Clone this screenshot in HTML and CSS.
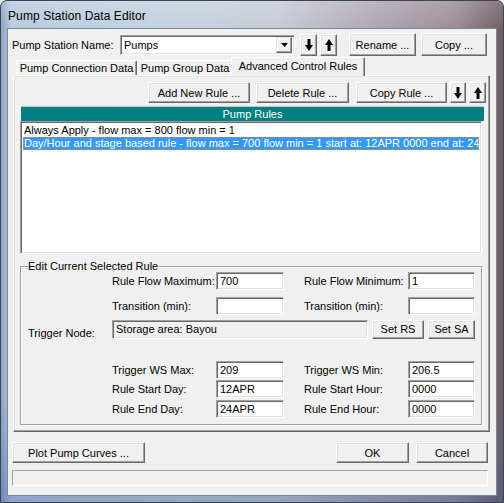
FILE: index.html
```html
<!DOCTYPE html>
<html>
<head>
<meta charset="utf-8">
<link rel="stylesheet" href="styles.css">
</head>
<body>
<div class="window">
  <div class="titlebar"><span class="title">Pump Station Data Editor</span></div>
  <div class="client">
    <div class="toprow">
      <span class="name-lbl">Pump Station Name:</span>
      <div class="combo">
        <span class="combo-text">Pumps</span>
        <span class="combo-btn"><svg width="7" height="4" viewBox="0 0 7 4"><path d="M0 0H7L3.5 4Z" fill="#000"/></svg></span>
      </div>
      <button class="btn arrow first"><svg width="8" height="12" viewBox="0 0 8 12"><path d="M2.5 0H5.5V6H8L4 12L0 6H2.5Z" fill="#000"/></svg></button>
      <button class="btn arrow"><svg width="8" height="12" viewBox="0 0 8 12"><path d="M2.5 12H5.5V6H8L4 0L0 6H2.5Z" fill="#000"/></svg></button>
      <button class="btn rename">Rename ...</button>
      <button class="btn copy">Copy ...</button>
    </div>
    <div class="tabs">
      <div class="tab t1">Pump Connection Data</div>
      <div class="tab t2">Pump Group Data</div>
      <div class="tab active">Advanced Control Rules</div>
    </div>
    <div class="panel">
      <div class="rulebtns">
        <button class="btn b-add">Add New Rule ...</button>
        <button class="btn b-del">Delete Rule ...</button>
        <button class="btn b-copy">Copy Rule ...</button>
        <button class="btn arrow b-down"><svg width="8" height="12" viewBox="0 0 8 12"><path d="M2.5 0H5.5V6H8L4 12L0 6H2.5Z" fill="#000"/></svg></button>
        <button class="btn arrow b-up"><svg width="8" height="12" viewBox="0 0 8 12"><path d="M2.5 12H5.5V6H8L4 0L0 6H2.5Z" fill="#000"/></svg></button>
      </div>
      <div class="rules-head">Pump Rules</div>
      <div class="list">
        <div class="item">Always Apply - flow max = 800 flow min = 1</div>
        <div class="item sel">Day/Hour and stage based rule - flow max = 700 flow min = 1 start at: 12APR 0000 end at: 24APR 0000</div>
      </div>
      <div class="group">
        <div class="legend">Edit Current Selected Rule</div>
        <div class="frow r1">
          <span class="c1"></span>
          <span class="lab">Rule Flow Maximum:</span>
          <span class="field f1">700</span>
          <span class="gap"></span>
          <span class="lab">Rule Flow Minimum:</span>
          <span class="field f2">1</span>
        </div>
        <div class="frow r2">
          <span class="c1"></span>
          <span class="lab">Transition (min):</span>
          <span class="field f1"></span>
          <span class="gap"></span>
          <span class="lab">Transition (min):</span>
          <span class="field f2"></span>
        </div>
        <div class="frow r3">
          <span class="c1 node-lbl">Trigger Node:</span>
          <span class="field disabled">Storage area: Bayou</span>
          <button class="btn b-rs">Set RS</button>
          <button class="btn b-sa">Set SA</button>
        </div>
        <div class="frow r4">
          <span class="c1"></span>
          <span class="lab">Trigger WS Max:</span>
          <span class="field f1">209</span>
          <span class="gap"></span>
          <span class="lab">Trigger WS Min:</span>
          <span class="field f2">206.5</span>
        </div>
        <div class="frow r5">
          <span class="c1"></span>
          <span class="lab">Rule Start Day:</span>
          <span class="field f1">12APR</span>
          <span class="gap"></span>
          <span class="lab">Rule Start Hour:</span>
          <span class="field f2">0000</span>
        </div>
        <div class="frow r6">
          <span class="c1"></span>
          <span class="lab">Rule End Day:</span>
          <span class="field f1">24APR</span>
          <span class="gap"></span>
          <span class="lab">Rule End Hour:</span>
          <span class="field f2">0000</span>
        </div>
      </div>
    </div>
    <div class="bottomrow">
      <button class="btn b-plot">Plot Pump Curves ...</button>
      <button class="btn b-ok">OK</button>
      <button class="btn b-cancel">Cancel</button>
    </div>
    <div class="status"></div>
  </div>
</div>
</body>
</html>
```
FILE: styles.css
```css
* { box-sizing: border-box; }
html, body { margin: 0; padding: 0; }
body {
  background: #eef0f2;
  font-family: "Liberation Sans", Arial, sans-serif;
  font-size: 11px;
  color: #000;
}
.window {
  width: 504px;
  height: 503px;
  border: 1px solid #3c4450;
  border-radius: 7px 7px 0 0;
  padding: 0 7px 7px 7px;
  display: flex;
  flex-direction: column;
  background:
    linear-gradient(180deg, rgba(255,255,255,0.18) 0%, rgba(255,255,255,0) 6%, rgba(60,80,130,0.0) 80%, rgba(60,90,160,0.35) 100%),
    linear-gradient(90deg, #8aa3c6 0%, #b9cadf 2%, #c3d0de 30%, #c6cbd5 55%, #aea4b0 75%, #9b8d96 90%, #6e5d63 100%);
}
.titlebar {
  height: 28px;
  display: flex;
  align-items: center;
  padding-top: 1px;
}
.title {
  font-size: 12px;
  color: #000;
  letter-spacing: 0.1px;
}
.client {
  flex: 1;
  background: #f0f0f0;
  box-shadow: 0 0 0 1px #7a8798;
  display: flex;
  flex-direction: column;
}
.btn {
  font-family: "Liberation Sans", Arial, sans-serif;
  font-size: 11px;
  color: #000;
  background: #f0f0f0;
  border: 1px solid;
  border-color: #ffffff #696969 #696969 #ffffff;
  box-shadow: inset -1px -1px 0 #a0a0a0, inset 1px 1px 0 #e3e3e3;
  padding: 0;
  margin: 0;
  height: 21px;
  display: flex;
  align-items: center;
  justify-content: center;
}
.field {
  background: #fff;
  border: 1px solid;
  border-color: #a0a0a0 #ffffff #ffffff #a0a0a0;
  box-shadow: inset 1px 1px 0 #696969, inset -1px -1px 0 #e3e3e3;
  height: 18px;
  padding: 2px 0 0 3px;
  line-height: 13px;
  white-space: nowrap;
  overflow: hidden;
}

/* top row */
.toprow {
  margin-top: 4px;
  height: 23px;
  display: flex;
  align-items: center;
  padding-left: 4px;
}
.name-lbl { width: 108px; }
.combo {
  width: 175px;
  height: 20px;
  background: #fff;
  border: 1px solid;
  border-color: #a0a0a0 #ffffff #ffffff #a0a0a0;
  box-shadow: inset 1px 1px 0 #696969, inset -1px -1px 0 #e3e3e3;
  display: flex;
  align-items: center;
  padding: 2px;
}
.combo-text { flex: 1; padding-left: 1px; }
.combo-btn {
  width: 16px;
  height: 16px;
  background: #f0f0f0;
  border: 1px solid;
  border-color: #e3e3e3 #696969 #696969 #e3e3e3;
  box-shadow: inset -1px -1px 0 #a0a0a0, inset 1px 1px 0 #fff;
  display: flex;
  align-items: center;
  justify-content: center;
}
.arrow { width: 17px; height: 22px; margin-left: 3px; }
.arrow.first { margin-left: 5px; }
.rename { width: 67px; height: 23px; margin-left: 12px; }
.copy { width: 66px; height: 23px; margin-left: 5px; }

/* tabs */
.tabs {
  margin-top: 1px;
  height: 18px;
  display: flex;
  align-items: flex-end;
  padding-left: 8px;
  position: relative;
  z-index: 2;
}
.tab {
  height: 15px;
  border: 1px solid;
  border-bottom: none;
  border-color: #ffffff #696969 transparent #ffffff;
  box-shadow: inset -1px 0 0 #a0a0a0;
  border-radius: 2px 2px 0 0;
  padding: 1px 0 0 0;
  text-align: center;
  line-height: 13px;
  background: #f0f0f0;
}
.t1 { width: 121px; }
.t2 { width: 96px; }
.tab.active {
  width: 134px;
  height: 19px;
  margin-left: -2px;
  margin-bottom: -1px;
  padding-top: 2px;
}

/* panel */
.panel {
  margin-left: 5px;
  width: 477px;
  height: 357px;
  border: 1px solid;
  border-color: #ffffff #696969 #696969 #ffffff;
  box-shadow: inset -1px -1px 0 #a0a0a0, inset 1px 1px 0 #e3e3e3;
  display: flex;
  flex-direction: column;
  position: relative;
  z-index: 1;
}
.rulebtns {
  margin-top: 6px;
  display: flex;
  justify-content: flex-end;
  padding-right: 3px;
}
.b-add { width: 102px; }
.b-del { width: 93px; margin-left: 6px; }
.b-copy { width: 91px; margin-left: 7px; }
.rulebtns .arrow { height: 21px; }
.b-down { width: 16px; margin-left: 3px; }
.b-up { width: 17px; margin-left: 3px; }
.rules-head {
  margin: 3px 0 0 7px;
  width: 463px;
  height: 15px;
  background: #008080;
  color: #fff;
  text-align: center;
  line-height: 14px;
  border-top: 1px solid #c8c8c8;
}
.list {
  margin-left: 6px;
  width: 462px;
  height: 133px;
  background: #fff;
  border: 1px solid;
  border-color: #a0a0a0 #ffffff #ffffff #a0a0a0;
  box-shadow: inset 1px 1px 0 #696969, inset -1px -1px 0 #e3e3e3;
  padding: 2px 2px 2px 2px;
  overflow: hidden;
}
.item {
  height: 13px;
  line-height: 13px;
  padding-left: 1px;
  white-space: nowrap;
  overflow: hidden;
}
.item.sel {
  background: #3399ff;
  color: #fff;
  outline: 1px dotted #d9863a;
  outline-offset: -1px;
}

/* group */
.group {
  margin: 12px 0 0 6px;
  width: 462px;
  height: 159px;
  border: 1px solid #a0a0a0;
  box-shadow: 1px 1px 0 #ffffff, inset 1px 1px 0 #ffffff;
  padding-left: 7px;
  display: flex;
  flex-direction: column;
}
.legend {
  margin-top: -8px;
  align-self: flex-start;
  background: #f0f0f0;
  padding: 0 1px 0 0;
  height: 14px;
  line-height: 14px;
}
.frow {
  display: flex;
  align-items: center;
}
.c1 { width: 84px; }
.lab { width: 104px; }
.f1 { width: 68px; }
.f2 { width: 67px; }
.gap { width: 20px; }
.r1 { margin-top: -1px; height: 18px; }
.r2 { margin-top: 7px; height: 18px; }
.r3 { margin-top: 4px; height: 20px; }
.r3 .node-lbl { align-self: flex-end; padding-bottom: 0; }
.field.disabled {
  width: 256px;
  height: 19px;
  background: #f0f0f0;
}
.b-rs { width: 52px; height: 19px; margin-left: 4px; }
.b-sa { width: 47px; height: 19px; margin-left: 4px; }
.r4 { margin-top: 22px; height: 18px; }
.r5 { margin-top: 1px; height: 18px; }
.r6 { margin-top: 2px; height: 18px; }

/* bottom */
.bottomrow {
  margin-top: 10px;
  display: flex;
  padding: 0 8px 0 4px;
}
.b-plot { width: 133px; }
.b-ok { width: 73px; margin-left: auto; }
.b-cancel { width: 72px; margin-left: 7px; }
.status {
  margin: 7px 8px 0 4px;
  height: 16px;
  border: 1px solid;
  border-color: #a0a0a0 #ffffff #ffffff #a0a0a0;
}
```
